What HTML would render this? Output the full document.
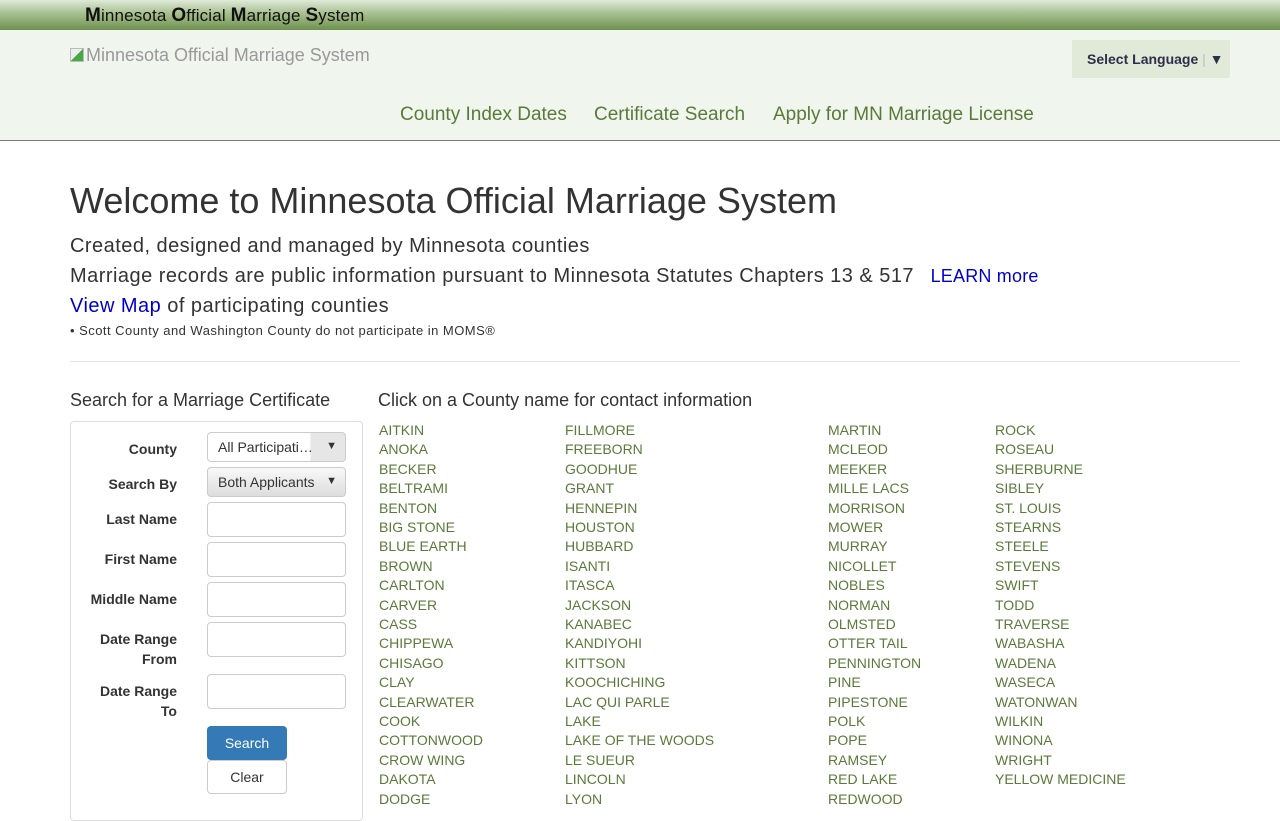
<!DOCTYPE html>
<html><head><meta charset="utf-8"><style>
*{box-sizing:border-box}
body{margin:0;width:1280px;height:800px;overflow:hidden;font-family:"Liberation Sans",Arial,sans-serif;background:#fff;color:#333;position:relative}
.a{position:absolute;white-space:nowrap}
.top{position:absolute;left:0;top:0;width:1280px;height:30px;background:linear-gradient(#dfe9d8 0%,#a7c08f 45%,#6f9150 100%)}
.hdr{position:absolute;left:0;top:30px;width:1280px;height:111px;background:#f0f5ee;border-bottom:1px solid #7a7a7a}
.nav{color:#5a7a3a;font-size:19px}
.lbl{font-weight:bold;font-size:14px;color:#333;text-align:right;width:107px;line-height:20px}
.inp{position:absolute;left:207px;width:139px;height:35px;border:1px solid #ccc;border-radius:4px;background:#fff}
.c{position:absolute;font-size:14px;color:#5a7a3a}
.ls{letter-spacing:0.47px}
</style></head><body>
<div class="top"></div>
<div class="a" style="left:85px;top:5px;font-size:17px;color:#111;letter-spacing:0.15px"><b style="font-size:19px">M</b>innesota <b style="font-size:19px">O</b>fficial <b style="font-size:19px">M</b>arriage <b style="font-size:19px">S</b>ystem</div>
<div class="hdr"></div>
<div class="a" style="left:70px;top:45px;font-size:18px;color:#999"><span style="display:inline-block;width:14px;height:14px;border:1px solid #bbb;background:linear-gradient(135deg,#eee 50%,#4a4 50%);vertical-align:-1px;margin-right:2px"></span>Minnesota Official Marriage System</div>
<div class="a" style="left:1072px;top:40px;width:158px;height:38px;background:#e1ead9;font-size:14px;font-weight:bold;color:#2e2e4a;padding:11px 0 0 15px">Select Language <span style="color:#bbb;font-weight:normal">|</span> ▼</div>
<div class="a nav" style="left:400px;top:104px">County Index Dates</div>
<div class="a nav" style="left:594px;top:104px">Certificate Search</div>
<div class="a nav" style="left:773px;top:104px">Apply for MN Marriage License</div>
<div class="a" style="left:70px;top:180px;font-size:36px;color:#333">Welcome to Minnesota Official Marriage System</div>
<div class="a ls" style="left:70px;top:235px;font-size:20px">Created, designed and managed by Minnesota counties</div>
<div class="a" style="left:70px;top:265px;font-size:20px"><span class="ls">Marriage records are public information pursuant to Minnesota Statutes Chapters 13 &amp; 517</span> <span style="color:#00c;font-size:18px;margin-left:11px;letter-spacing:0.2px">LEARN more</span></div>
<div class="a ls" style="left:70px;top:295px;font-size:20px"><span style="color:#00c">View Map</span> of participating counties</div>
<div class="a ls" style="left:70px;top:323px;font-size:13px">• Scott County and Washington County do not participate in MOMS®</div>
<div class="a" style="left:70px;top:361px;width:1170px;border-top:1px solid #e6e6e6"></div>
<div class="a" style="left:70px;top:390px;font-size:18px">Search for a Marriage Certificate</div>
<div class="a" style="left:378px;top:390px;font-size:18px">Click on a County name for contact information</div>
<div class="a" style="left:70px;top:421px;width:293px;height:400px;border:1px solid #ddd;border-radius:4px"></div>
<div class="a lbl" style="left:70px;top:439px">County</div>
<div class="a lbl" style="left:70px;top:474px">Search By</div>
<div class="a lbl" style="left:70px;top:509px">Last Name</div>
<div class="a lbl" style="left:70px;top:549px">First Name</div>
<div class="a lbl" style="left:70px;top:589px">Middle Name</div>
<div class="a lbl" style="left:70px;top:629px">Date Range<br>From</div>
<div class="a lbl" style="left:70px;top:681px">Date Range<br>To</div>
<div class="inp" style="top:432px;height:30px;font-size:14px;padding:6px 0 0 10px;background:linear-gradient(90deg,#fff 75%,#e6e6e6 75%)">All Participati…<span style="position:absolute;right:8px;top:7px;font-size:11px">▼</span></div>
<div class="inp" style="top:467px;height:30px;font-size:14px;padding:6px 0 0 10px;background:linear-gradient(#f8f8f8,#ddd)">Both Applicants<span style="position:absolute;right:8px;top:7px;font-size:11px">▼</span></div>
<div class="inp" style="top:502px"></div>
<div class="inp" style="top:542px"></div>
<div class="inp" style="top:582px"></div>
<div class="inp" style="top:622px"></div>
<div class="inp" style="top:674px"></div>
<div class="a" style="left:207px;top:726px;width:80px;height:34px;background:#337ab7;border-radius:4px;color:#fff;font-size:14px;text-align:center;line-height:34px">Search</div>
<div class="a" style="left:207px;top:760px;width:80px;height:34px;border:1px solid #ccc;border-radius:4px;font-size:14px;text-align:center;line-height:32px">Clear</div>
<div id="cl"></div>
<script>
var cols=[[379,"AITKIN,ANOKA,BECKER,BELTRAMI,BENTON,BIG STONE,BLUE EARTH,BROWN,CARLTON,CARVER,CASS,CHIPPEWA,CHISAGO,CLAY,CLEARWATER,COOK,COTTONWOOD,CROW WING,DAKOTA,DODGE"],
[565,"FILLMORE,FREEBORN,GOODHUE,GRANT,HENNEPIN,HOUSTON,HUBBARD,ISANTI,ITASCA,JACKSON,KANABEC,KANDIYOHI,KITTSON,KOOCHICHING,LAC QUI PARLE,LAKE,LAKE OF THE WOODS,LE SUEUR,LINCOLN,LYON"],
[828,"MARTIN,MCLEOD,MEEKER,MILLE LACS,MORRISON,MOWER,MURRAY,NICOLLET,NOBLES,NORMAN,OLMSTED,OTTER TAIL,PENNINGTON,PINE,PIPESTONE,POLK,POPE,RAMSEY,RED LAKE,REDWOOD"],
[995,"ROCK,ROSEAU,SHERBURNE,SIBLEY,ST. LOUIS,STEARNS,STEELE,STEVENS,SWIFT,TODD,TRAVERSE,WABASHA,WADENA,WASECA,WATONWAN,WILKIN,WINONA,WRIGHT,YELLOW MEDICINE"]];
var h="";cols.forEach(function(c){c[1].split(",").forEach(function(n,i){h+='<div class="c" style="left:'+c[0]+'px;top:'+(422+i*19.4)+'px">'+n+'</div>';});});
document.getElementById("cl").innerHTML=h;
</script>
</body></html>
